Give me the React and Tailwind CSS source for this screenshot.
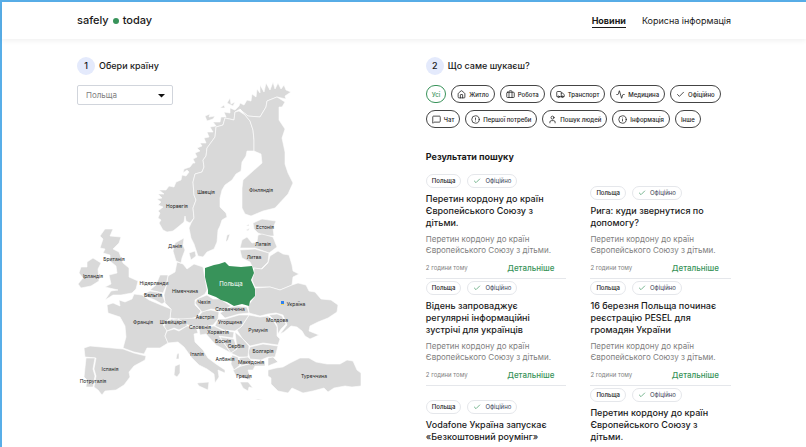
import { Activity, Briefcase, Check, CircleAlert, House, Info, MessageSquare, Truck, User } from "lucide-react";

const filters = [
  { label: "Усі", active: true },
  { label: "Житло", icon: House },
  { label: "Робота", icon: Briefcase },
  { label: "Транспорт", icon: Truck },
  { label: "Медицина", icon: Activity },
  { label: "Офіційно", icon: Check },
  { label: "Чат", icon: MessageSquare },
  { label: "Першої потреби", icon: CircleAlert },
  { label: "Пошук людей", icon: User },
  { label: "Інформація", icon: Info },
  { label: "Інше" },
];

const news = [
  "Перетин кордону до країн Європейського Союзу з дітьми.",
  "Рига: куди звернутися по допомогу?",
  "Відень запроваджує регулярні інформаційні зустрічі для українців",
  "16 березня Польща починає реєстрацію PESEL для громадян України",
  "Vodafone Україна запускає «Безкоштовний роумінг»",
  "Перетин кордону до країн Європейського Союзу з дітьми.",
];

const countries = [
  // Norway
  "M167 232L163 230 159 223 161 220 158 218 160 213 158 211 163 207 158 205 161 202 157 199 162 198 158 194 164 194 159 190 166 190 169 186 174 187 176 182 181 180 182 175 186 176 189 172 187 170 183 173 184 169 190 167 193 163 195 163 193 159 197 157 195 153 200 151 197 148 202 146 200 143 206 143 204 138 209 137 207 132 213 132 210 127 216 126 213 122 220 122 221 117 226 117 224 112 230 113 230 108 235 110 239 106 240 103 244 105 247 100 251 101 252 94 256 97 257 89 260 93 260 85 264 92 266 83 270 90 273 82 275 89 278 83 281 89 284 85 286 90 291 92 285 96 286 99 277 97 267 101 266 107 263 112 260 117 248 116 243 112 240 109 235 112 234 120 225 118 223 125 216 127 215 137 207 148 206 156 203 160 204 167 202 172 195 174 193 182 194 195 196 200 193 208 194 218 190 223 186 221 185 216 184 222 178 227 173 231Z",
  "M205 116L210 114 209 117 215 116 213 119 207 121ZM220 108L224 105 225 108ZM227 103L230 98 231 104 235 102 233 106Z",
  // Sweden
  "M239 111L245 115 250 121 253 130 254 140 254 151 247 151 246 156 242 162 241 171 236 174 232 180 225 185 222 190 220 198 220 207 226 213 227 217 222 220 220 226 218 230 217 242 214 249 207 252 203 257 198 256 194 244 191 238 189 228 191 223 194 218 193 208 196 200 194 195 193 182 195 174 202 172 204 167 203 160 206 156 207 148 215 137 216 127 223 125 225 118 234 120 235 112Z",
  // Finland
  "M240 109L243 112 248 116 260 117 263 112 266 107 267 101 277 97 285 102 282 107 279 107 279 120 285 129 282 138 285 152 285 164 288 173 293 183 288 194 275 208 263 211 251 216 245 214 242 208 242 188 243 180 262 163 261 154 254 151 254 140 253 130 250 121 245 115Z",
  // Baltic islands
  "M226 240L227 235 230 234 228 240 226 242ZM246 226L249 224 249 226ZM246 230L250 228 248 231Z",
  // Estonia, Latvia, Lithuania
  "M253 223L262 219 276 221 273 228 274 236 266 236 258 233 254 229Z",
  "M240 248L242 240 247 237 252 243 257 242 258 235 262 234 273 237 277 247 269 253 255 248Z",
  "M240 250L255 249 269 253 268 262 261 269 253 268 250 262 242 258Z",
  // Belarus
  "M254 268L262 269 268 263 270 256 278 251 283 254 289 255 292 265 293 271 299 274 293 277 292 285 280 290 270 287 255 287 252 280 254 273Z",
  // Ukraine
  "M255 288L270 287 280 290 292 285 298 283 306 285 309 291 315 292 321 299 331 300 338 305 337 312 328 318 318 322 310 326 309 331 319 335 310 339 305 336 302 331 297 327 291 326 284 332 280 334 287 325 283 315 276 313 268 314 260 316 249 313 248 306 255 296Z",
  // Moldova
  "M269 315L277 314 282 316 286 324 281 329 278 334 277 325 273 319Z",
  // Romania
  "M249 315L260 317 268 316 273 320 277 327 277 336 280 339 278 345 263 343 250 346 242 338 237 330 242 326Z",
  // Bulgaria
  "M250 347L263 344 278 346 275 357 268 357 261 360 250 359 248 352Z",
  // Turkey
  "M268 358L273 357 278 362 268 366ZM268 370L276 368 283 367 290 363 300 358 309 358 316 362 327 364 340 364 347 360 353 361 357 370 361 373 361 386 352 387 345 386 334 388 328 392 324 388 313 391 303 393 292 388 288 393 278 391 271 384 271 378 268 376Z",
  // Greece
  "M233 370L241 366 253 363 265 361 265 366 255 366 253 370 248 370 251 380 242 378 236 376ZM240 382L248 382 253 388 249 387 248 391 243 388ZM255 399L263 399 258 400Z",
  // Germany
  "M177 262L183 264 187 269 194 264 203 267 205 278 207 290 205 294 195 300 195 305 201 311 197 317 187 320 177 319 170 318 171 309 165 303 164 295 166 287 168 276 175 272Z",
  // Denmark
  "M175 243L184 238 183 245 185 250 182 258 181 263 176 261 173 251ZM189 253L195 251 196 256 191 260Z",
  // Netherlands, Belgium
  "M160 275L168 275 166 286 163 293 150 290 156 285Z",
  "M142 295L150 291 162 293 165 302 162 304 155 300Z",
  // France
  "M107 305L113 303 120 306 119 300 125 302 132 299 134 294 142 295 149 300 161 305 171 309 170 318 163 325 167 330 165 336 168 343 160 348 147 348 144 354 134 352 123 348 126 337 125 326 120 317 108 313Z",
  // Spain, Portugal
  "M84 348L90 346 123 349 134 353 146 356 145 360 134 366 129 372 130 377 124 385 116 390 105 391 102 395 98 390 94 387 96 376 94 369 96 358 85 357Z",
  "M86 358L95 358 93 369 95 376 93 387 86 387 87 380 84 377Z",
  // Switzerland, Austria
  "M168 320L177 319 188 322 187 326 179 330 174 328 167 331 164 326Z",
  "M178 319L197 318 203 311 211 310 219 312 218 319 213 325 200 327 188 325Z",
  // Czechia, Slovakia, Hungary
  "M195 303L197 299 207 295 213 299 220 299 231 306 222 311 211 309 202 312Z",
  "M220 313L231 307 238 306 247 307 249 313 239 314 225 318Z",
  "M218 319L225 319 239 315 249 315 241 327 235 331 224 330 215 326Z",
  // Balkans
  "M199 328L214 326 224 331 234 332 233 338 219 336 231 353 216 345 206 334 200 335Z",
  "M220 337L234 339 237 349 231 353Z",
  "M235 332L242 338 249 346 248 357 239 357 231 353 237 349Z",
  "M232 355L238 357 240 365 234 370 231 364Z",
  "M239 358L248 357 253 362 241 366Z",
  // Italy
  "M167 331L174 329 179 331 187 326 196 327 198 333 194 334 195 342 203 350 208 358 216 364 225 370 225 373 218 370 219 377 215 383 214 374 207 369 199 365 192 358 184 347 178 342 168 343 165 336ZM197 383L209 382 208 390 199 386ZM175 366L180 364 180 373 177 377 174 375ZM177 354L179 353 179 359 176 359Z",
  // Great Britain and Ireland
  "M105 229L113 229 110 236 121 237 119 243 113 249 119 252 123 263 129 268 129 277 138 281 136 289 132 293 121 295 113 295 105 300 111 291 118 290 105 287 111 284 109 275 117 273 116 266 110 261 110 255 103 253 105 249 100 248 103 239 100 236Z",
  "M87 262L93 258 101 263 98 269 99 281 91 286 81 288 78 284 83 278 79 273 81 267 87 267Z",
];

const labels = [
  ["Швеція", 206, 194],
  ["Фінляндія", 261, 192],
  ["Норвегія", 177, 208],
  ["Естонія", 265, 229],
  ["Латвія", 263, 246],
  ["Литва", 254, 259],
  ["Данія", 175, 248],
  ["Британія", 114, 261],
  ["Ірландія", 93, 278],
  ["Нідерланди", 154, 285],
  ["Бельгія", 153, 297],
  ["Німеччина", 185, 293],
  ["Чехія", 204, 304],
  ["Словаччина", 230, 311],
  ["Австрія", 205, 319],
  ["Угорщина", 230, 324],
  ["Румунія", 258, 332],
  ["Молдова", 277, 322],
  ["Україна", 296, 306],
  ["Франція", 143, 324],
  ["Швейцарія", 173, 324],
  ["Словенія", 200, 329],
  ["Хорватія", 218, 334],
  ["Боснія", 223, 343],
  ["Сербія", 236, 348],
  ["Болгарія", 263, 353],
  ["Албанія", 225, 361],
  ["Македонія", 251, 364],
  ["Греція", 244, 378],
  ["Італія", 197, 356],
  ["Іспанія", 110, 371],
  ["Потругалія", 93, 383],
  ["Туреччина", 314, 378],
];

function EuropeMap() {
  return (
    <svg viewBox="77 80 288 322" className="-mt-[25px] w-full max-w-[288px]" role="img" aria-label="Європа">
      <g fill="#d9d9d9" stroke="#fff" strokeWidth="0.6" strokeLinejoin="round">
        {countries.map((d) => (
          <path key={d} d={d} />
        ))}
      </g>
      <path
        d="M205 268L214 265 219 264 225 262 229 266 241 267 252 266 254 273 251 280 255 289 255 296 250 301 249 306 242 304 234 306 227 302 221 300 216 297 208 294 208 290 205 277Z"
        fill="#38935a"
      />
      <rect x="281" y="301" width="3" height="3" fill="#2f80ed" />
      <rect x="281" y="304" width="3" height="1" fill="#f2d95c" />
      <g fontSize="5" textAnchor="middle" fill="#222">
        {labels.map(([name, x, y]) => (
          <text key={name} x={x} y={y}>
            {name}
          </text>
        ))}
      </g>
      <text x="231" y="286" fontSize="6" textAnchor="middle" fill="#fff">
        Польща
      </text>
    </svg>
  );
}

function StepTitle({ number, children }) {
  return (
    <h2 className="flex items-center gap-1 text-[9px] font-medium">
      <span className="flex size-[18px] items-center justify-center rounded-full bg-[#e4eafc]">{number}</span>
      {children}
    </h2>
  );
}

function NewsCard({ title }) {
  return (
    <article className="border-b border-gray-200 pt-[2px] pb-1">
      <div className="flex gap-[6px] text-[6px] leading-[12px]">
        <span className="rounded-full border border-gray-200 px-[5px] font-medium">Польща</span>
        <span className="flex items-center gap-[4px] rounded-full border border-gray-200 px-[5px] text-gray-700">
          <Check size={8} strokeWidth={2} className="text-[#38935a]" />
          Офіційно
        </span>
      </div>
      <div className="pr-3">
        <h3 className="mt-[5px] text-[9px] leading-[12px] font-medium">{title}</h3>
        <p className="mt-[5px] text-[8px] leading-[11px] text-[#808080]">
          Перетин кордону до країн Європейського Союзу з дітьми.
        </p>
        <div className="mt-[6px] flex items-center justify-between leading-[12px]">
          <span className="text-[6px] text-[#808080]">2 години тому</span>
          <a href="#details" className="text-[8px] font-medium text-[#38935a]">
            Детальніше
          </a>
        </div>
      </div>
    </article>
  );
}

export default function App() {
  return (
    <div className="min-h-screen border-t-2 border-l-2 border-[#58aee8] bg-white font-['Inter',sans-serif] text-[#1a1a1a]">
      <header className="flex h-[37px] items-center justify-between px-[75px] shadow-[0_2px_5px_rgba(0,0,0,0.06)]">
        <a href="#home" className="flex items-center gap-1 text-[11px] font-medium">
          safely
          <span className="size-[6px] rounded-full bg-[#38935a]" />
          today
        </a>
        <nav className="flex gap-4 text-[9px] leading-[13px]">
          <a href="#news" className="border-b border-[#1a1a1a] font-bold">
            Новини
          </a>
          <a href="#info">Корисна інформація</a>
        </nav>
      </header>

      <main className="grid grid-cols-[8fr_7fr] px-[75px] pt-[18px]">
        <section>
          <StepTitle number={1}>Обери країну</StepTitle>
          <div className="relative z-10 mt-[10px] w-24">
            <select
              aria-label="Країна"
              className="block h-5 w-full appearance-none rounded-xs border border-gray-300 bg-white px-2 text-[8px] text-[#808080]"
            >
              <option>Польща</option>
            </select>
            <svg viewBox="0 0 6 3" className="pointer-events-none absolute top-[9px] right-2 w-[7px]">
              <path d="M0 0h6L3 3z" fill="#111" />
            </svg>
          </div>
          <EuropeMap />
        </section>

        <section>
          <StepTitle number={2}>Що саме шукаєш?</StepTitle>
          <div className="mt-[10px] flex flex-wrap gap-x-[5px] gap-y-[7px]">
            {filters.map(({ label, icon: Icon, active }) => (
              <button
                key={label}
                className={`flex h-[18px] items-center gap-[3px] rounded-full border px-[5px] text-[6px] font-medium ${active ? "border-[#38935a] text-[#38935a]" : "border-[#444]"}`}
              >
                {Icon && <Icon size={9} strokeWidth={2} />}
                {label}
              </button>
            ))}
          </div>

          <h2 className="mt-[22px] text-[9px] leading-[14px] font-bold">Результати пошуку</h2>
          <div className="mt-2 grid grid-cols-2 items-end gap-x-6">
            {news.map((title, i) => (
              <NewsCard key={i} title={title} />
            ))}
          </div>
        </section>
      </main>
    </div>
  );
}
